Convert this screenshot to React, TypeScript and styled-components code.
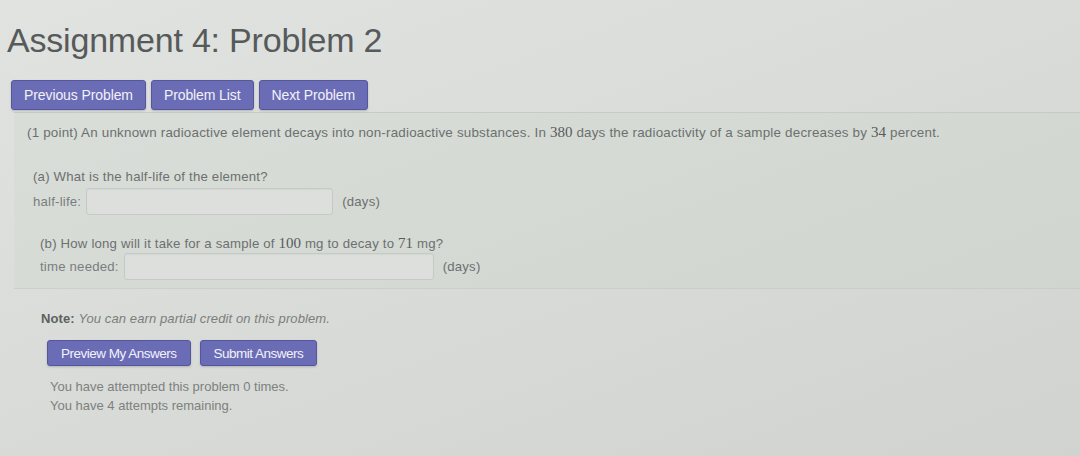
import styled, { createGlobalStyle } from 'styled-components'

const GlobalStyle = createGlobalStyle`
  html, body {
    margin: 0;
    padding: 0;
  }
  body {
    width: 1080px;
    height: 456px;
    overflow: hidden;
    font-family: "Liberation Sans", Arial, sans-serif;
    background: linear-gradient(160deg, #e1e3e0 0%, #d9dcd8 45%, #d0d3cf 100%);
    color: #6c706f;
  }
`

const Page = styled.div`
  padding: 20px 0 0 7px;
`

const Title = styled.h1`
  margin: 0;
  font-size: 34px;
  line-height: 40px;
  font-weight: 400;
  color: #565a5b;
  letter-spacing: -0.2px;
`

const NavBar = styled.div`
  display: flex;
  gap: 5px;
  margin: 20px 0 2px 4px;
`

const Button = styled.button<{ $small?: boolean }>`
  height: ${(p) => (p.$small ? 26 : 30)}px;
  padding: 0 ${(p) => (p.$small ? 13 : 12)}px;
  border: 1px solid #55579d;
  border-radius: 3px;
  background: #6a6cb6;
  color: #f2f2f8;
  font-family: "Liberation Sans", Arial, sans-serif;
  font-size: ${(p) => (p.$small ? 13.5 : 14)}px;
  letter-spacing: ${(p) => (p.$small ? -0.5 : -0.1)}px;
  box-shadow: 0 1px 2px rgba(60, 60, 90, 0.25);
`

const ProblemPanel = styled.div`
  margin-left: 7px;
  padding: 10px 13px 8px 13px;
  border-top: 1px solid rgba(190, 194, 190, 0.6);
  border-bottom: 1px solid rgba(190, 194, 190, 0.45);
  background: rgba(205, 210, 205, 0.25);
`

const Statement = styled.p`
  margin: 0;
  font-size: 13.4px;
  line-height: 18px;
  letter-spacing: 0.2px;
`

const Num = styled.span`
  font-family: "Liberation Serif", "DejaVu Serif", serif;
  font-size: 15px;
  color: #575b5b;
  letter-spacing: 0;
`

const Part = styled.div<{ $indent: number; $top: number }>`
  margin: ${(p) => p.$top}px 0 0 ${(p) => p.$indent}px;
  font-size: 13.2px;
  letter-spacing: 0.2px;
`

const Question = styled.div`
  line-height: 18px;
`

const AnswerRow = styled.div<{ $top: number }>`
  display: flex;
  align-items: center;
  gap: 5px;
  margin-top: ${(p) => p.$top}px;
`

const Label = styled.span`
  color: #7a7e7d;
`

const AnswerInput = styled.input<{ $w: number }>`
  width: ${(p) => p.$w}px;
  height: 27px;
  box-sizing: border-box;
  border: 1px solid #c6c9c5;
  border-radius: 3px;
  background: #dcdfdb;
  box-shadow: inset 0 1px 1px rgba(0, 0, 0, 0.04);
`

const Unit = styled.span`
  margin-left: 4px;
  color: #6c706f;
`

const Note = styled.div`
  margin: 21px 0 0 34px;
  font-size: 13px;
  line-height: 18px;
  letter-spacing: 0.1px;
  b {
    color: #5d6161;
  }
  i {
    color: #7a7e7d;
  }
`

const ActionBar = styled.div`
  display: flex;
  gap: 9px;
  margin: 12px 0 0 40px;
`

const Attempts = styled.div`
  margin: 11px 0 0 43px;
  font-size: 13px;
  line-height: 19px;
  color: #7d8180;
`

export default function App() {
  return (
    <>
      <GlobalStyle />
      <Page>
        <Title>Assignment 4: Problem 2</Title>
        <NavBar>
          <Button>Previous Problem</Button>
          <Button>Problem List</Button>
          <Button>Next Problem</Button>
        </NavBar>

        <ProblemPanel>
          <Statement>
            (1 point) An unknown radioactive element decays into non-radioactive substances. In{' '}
            <Num>380</Num> days the radioactivity of a sample decreases by <Num>34</Num> percent.
          </Statement>

          <Part $indent={6} $top={26}>
            <Question>(a) What is the half-life of the element?</Question>
            <AnswerRow $top={2}>
              <Label>half-life:</Label>
              <AnswerInput $w={247} />
              <Unit>(days)</Unit>
            </AnswerRow>
          </Part>

          <Part $indent={13} $top={19}>
            <Question>
              (b) How long will it take for a sample of <Num>100</Num> mg to decay to <Num>71</Num> mg?
            </Question>
            <AnswerRow $top={0}>
              <Label>time needed:</Label>
              <AnswerInput $w={310} />
              <Unit>(days)</Unit>
            </AnswerRow>
          </Part>
        </ProblemPanel>

        <Note>
          <b>Note:</b> <i>You can earn partial credit on this problem.</i>
        </Note>

        <ActionBar>
          <Button $small>Preview My Answers</Button>
          <Button $small>Submit Answers</Button>
        </ActionBar>

        <Attempts>
          You have attempted this problem 0 times.
          <br />
          You have 4 attempts remaining.
        </Attempts>
      </Page>
    </>
  )
}
